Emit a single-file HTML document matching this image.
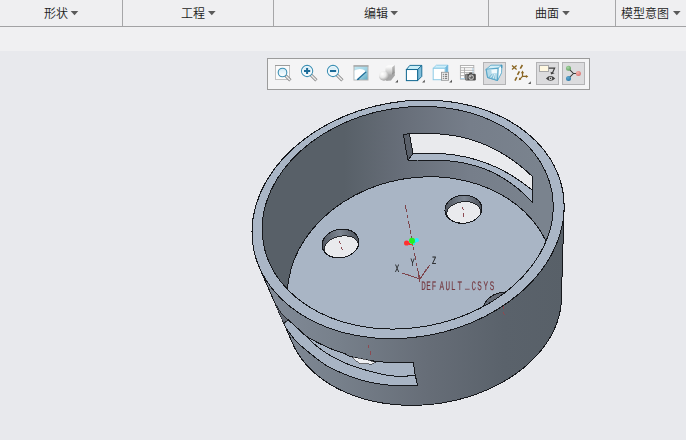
<!DOCTYPE html>
<html lang="zh"><head><meta charset="utf-8"><title>Creo</title>
<style>
html,body{margin:0;padding:0}
body{width:686px;height:440px;overflow:hidden;position:relative;background:#e8e9ed;font-family:"Liberation Sans","Noto Sans CJK SC",sans-serif}
#top{position:absolute;left:0;top:0;width:686px;height:26px;background:#efeff1;border-bottom:1px solid #a2a2a4}
#sub{position:absolute;left:0;top:27px;width:686px;height:24px;background:#f0f0f2}
.tab{position:absolute;top:0;height:26px;border-right:1px solid #a6a6a8;box-sizing:border-box}
.lbl{position:absolute;top:6px;font-size:12px;line-height:16px;color:#1c1c1c;white-space:nowrap;letter-spacing:0;font-weight:350}
.arr{position:absolute;top:11px;width:0;height:0;border-left:3.7px solid transparent;border-right:3.7px solid transparent;border-top:4.4px solid #505050}
#tb{position:absolute;left:267px;top:58px;width:321px;height:30px;border:1px solid #9b9b9b;background:#f4f4f5}
</style></head><body>
<div id="top">
<div class="tab" style="left:0;width:123px"></div>
<div class="tab" style="left:123px;width:151px"></div>
<div class="tab" style="left:274px;width:215px"></div>
<div class="tab" style="left:489px;width:127px"></div>
<span class="lbl" style="left:44px">形状</span>
<span class="lbl" style="left:181px">工程</span>
<span class="lbl" style="left:364px">编辑</span>
<span class="lbl" style="left:535px">曲面</span>
<span class="lbl" style="left:621px">模型意图</span>
</div>
<svg width="686" height="26" style="position:absolute;left:0;top:0"><path d="M70.7 10.9 h7.6 l-3.8 4.4 z" fill="#5a5a5a"/><path d="M208.0 10.9 h7.6 l-3.8 4.4 z" fill="#5a5a5a"/><path d="M390.4 10.9 h7.6 l-3.8 4.4 z" fill="#5a5a5a"/><path d="M562.2 10.9 h7.6 l-3.8 4.4 z" fill="#5a5a5a"/><path d="M673.0 10.9 h7.6 l-3.8 4.4 z" fill="#5a5a5a"/></svg>
<div id="sub"></div>
<div id="tb"></div>
<svg width="686" height="440" viewBox="0 0 686 440" style="position:absolute;left:0;top:0" shape-rendering="crispEdges">
<defs>
<linearGradient id="gOut" gradientUnits="userSpaceOnUse" x1="262" y1="0" x2="565" y2="0">
<stop offset="0" stop-color="#828b98"/><stop offset="0.25" stop-color="#77808b"/><stop offset="0.55" stop-color="#666d77"/><stop offset="0.8" stop-color="#5a626b"/><stop offset="1" stop-color="#586068"/></linearGradient>
<linearGradient id="gIn" gradientUnits="userSpaceOnUse" x1="262" y1="0" x2="555" y2="0">
<stop offset="0" stop-color="#586068"/><stop offset="0.28" stop-color="#586068"/><stop offset="0.49" stop-color="#686f7a"/><stop offset="0.71" stop-color="#767e8a"/><stop offset="0.95" stop-color="#7a838e"/><stop offset="1" stop-color="#7a838e"/></linearGradient>
<linearGradient id="gHole" x1="0" y1="0" x2="1" y2="0">
<stop offset="0" stop-color="#4f555e"/><stop offset="0.55" stop-color="#7d8692"/><stop offset="0.85" stop-color="#5d636d"/><stop offset="1" stop-color="#50565f"/></linearGradient>
<clipPath id="cIn"><path d="M551.908 191.661 A146.545 110.010 -10.243 0 1 427.260 325.976 A146.545 110.010 -10.243 0 1 263.489 243.777 A146.545 110.010 -10.243 0 1 388.137 109.462 A146.545 110.010 -10.243 0 1 551.908 191.661 Z" /></clipPath>
<clipPath id="cHull"><path d="M293.7 345.9 L293.0 344.3 L259.6 268.1 L258.8 266.2 L258.1 264.3 L257.3 262.3 L256.6 260.4 L256.0 258.4 L255.4 256.4 L254.9 254.5 L254.4 252.5 L253.9 250.5 L253.5 248.4 L253.2 246.4 L252.9 244.4 L252.6 242.3 L252.4 240.3 L252.2 238.2 L252.1 236.2 L252.0 234.1 L252.0 232.0 L252.0 230.0 L252.1 227.9 L252.2 225.8 L252.4 223.7 L252.6 221.7 L252.9 219.6 L253.2 217.5 L253.5 215.4 L253.9 213.3 L254.4 211.3 L254.9 209.2 L255.4 207.1 L256.0 205.0 L256.6 203.0 L257.3 200.9 L258.1 198.9 L258.8 196.8 L259.6 194.8 L260.5 192.7 L261.4 190.7 L262.4 188.7 L263.4 186.7 L264.4 184.7 L265.5 182.7 L266.6 180.7 L267.8 178.8 L269.0 176.8 L270.3 174.9 L271.6 173.0 L272.9 171.0 L274.3 169.1 L275.7 167.3 L277.2 165.4 L278.7 163.6 L280.2 161.7 L281.8 159.9 L283.4 158.1 L285.1 156.3 L286.8 154.6 L288.5 152.8 L290.3 151.1 L292.1 149.4 L293.9 147.8 L295.8 146.1 L297.7 144.5 L299.7 142.9 L301.6 141.3 L303.6 139.7 L305.7 138.2 L307.8 136.7 L309.9 135.2 L312.0 133.7 L314.1 132.3 L316.3 130.9 L318.6 129.5 L320.8 128.1 L323.1 126.8 L325.4 125.5 L327.7 124.2 L330.0 123.0 L332.4 121.8 L334.8 120.6 L337.2 119.5 L339.7 118.3 L342.1 117.2 L344.6 116.2 L347.1 115.2 L349.6 114.2 L352.1 113.2 L354.7 112.3 L357.3 111.4 L359.8 110.5 L362.4 109.7 L365.0 108.9 L367.7 108.1 L370.3 107.4 L373.0 106.7 L375.6 106.0 L378.3 105.4 L381.0 104.8 L383.7 104.2 L386.3 103.7 L389.0 103.2 L391.8 102.8 L394.5 102.3 L397.2 102.0 L399.9 101.6 L402.6 101.3 L405.3 101.0 L408.1 100.8 L410.8 100.6 L413.5 100.4 L416.2 100.3 L419.0 100.2 L421.7 100.1 L424.4 100.1 L427.1 100.1 L429.8 100.2 L432.5 100.3 L435.2 100.4 L437.8 100.6 L440.5 100.8 L443.2 101.0 L445.8 101.3 L448.5 101.6 L451.1 101.9 L453.7 102.3 L456.3 102.7 L458.9 103.1 L461.4 103.6 L464.0 104.2 L466.5 104.7 L469.0 105.3 L471.5 105.9 L474.0 106.6 L476.5 107.3 L478.9 108.0 L481.3 108.8 L483.7 109.5 L486.1 110.4 L488.4 111.2 L490.8 112.1 L493.1 113.1 L495.3 114.0 L497.6 115.0 L499.8 116.0 L502.0 117.1 L504.1 118.2 L506.3 119.3 L508.4 120.4 L510.4 121.6 L512.5 122.8 L514.5 124.1 L516.5 125.3 L518.4 126.6 L520.3 127.9 L522.2 129.3 L524.0 130.7 L525.8 132.1 L527.6 133.5 L529.3 135.0 L531.0 136.4 L532.7 137.9 L534.3 139.5 L535.9 141.0 L537.4 142.6 L538.9 144.2 L540.4 145.9 L541.8 147.5 L543.2 149.2 L544.6 150.9 L545.9 152.6 L547.1 154.3 L548.3 156.1 L549.5 157.8 L550.6 159.6 L551.7 161.5 L552.8 163.3 L553.8 165.1 L554.7 167.0 L555.6 168.9 L556.5 170.8 L557.3 172.7 L558.1 174.6 L558.8 176.5 L559.5 178.5 L560.1 180.4 L560.7 182.4 L561.3 184.4 L561.8 186.4 L562.2 188.4 L562.6 190.4 L563.0 192.4 L563.3 194.5 L563.5 196.5 L563.7 198.6 L563.9 200.6 L564.0 202.7 L564.1 204.7 L564.1 206.8 L564.1 208.9 L561.3 300.1 L561.3 301.8 L561.1 303.5 L561.0 305.3 L560.7 307.0 L560.5 308.7 L560.2 310.5 L559.9 312.2 L559.5 313.9 L559.1 315.6 L558.6 317.4 L558.1 319.1 L557.5 320.8 L557.0 322.5 L556.3 324.2 L555.7 325.9 L555.0 327.6 L554.2 329.3 L553.4 331.0 L552.6 332.6 L551.8 334.3 L550.9 335.9 L549.9 337.6 L548.9 339.2 L547.9 340.9 L546.9 342.5 L545.8 344.1 L544.6 345.7 L543.5 347.2 L542.3 348.8 L541.0 350.4 L539.8 351.9 L538.5 353.4 L537.1 355.0 L535.7 356.5 L534.3 357.9 L532.9 359.4 L531.4 360.9 L529.9 362.3 L528.3 363.7 L526.8 365.1 L525.2 366.5 L523.5 367.9 L521.9 369.2 L520.2 370.5 L518.4 371.8 L516.7 373.1 L514.9 374.4 L513.1 375.6 L511.2 376.9 L509.4 378.1 L507.5 379.2 L505.6 380.4 L503.6 381.5 L501.7 382.6 L499.7 383.7 L497.7 384.8 L495.6 385.8 L493.6 386.9 L491.5 387.9 L489.4 388.8 L487.3 389.8 L485.1 390.7 L483.0 391.6 L480.8 392.4 L478.6 393.3 L476.4 394.1 L474.2 394.9 L471.9 395.6 L469.7 396.4 L467.4 397.1 L465.1 397.8 L462.8 398.4 L460.5 399.0 L458.2 399.6 L455.9 400.2 L453.6 400.7 L451.2 401.2 L448.9 401.7 L446.5 402.2 L444.1 402.6 L441.8 403.0 L439.4 403.3 L437.0 403.7 L434.6 404.0 L432.2 404.2 L429.8 404.5 L427.4 404.7 L425.0 404.9 L422.6 405.0 L420.2 405.1 L417.8 405.2 L415.4 405.3 L413.1 405.3 L410.7 405.3 L408.3 405.3 L405.9 405.3 L403.5 405.2 L401.2 405.0 L398.8 404.9 L396.5 404.7 L394.1 404.5 L391.8 404.3 L389.5 404.0 L387.1 403.7 L384.8 403.4 L382.5 403.0 L380.3 402.6 L378.0 402.2 L375.7 401.8 L373.5 401.3 L371.3 400.8 L369.1 400.3 L366.9 399.7 L364.7 399.1 L362.6 398.5 L360.4 397.8 L358.3 397.2 L356.2 396.5 L354.2 395.7 L352.1 395.0 L350.1 394.2 L348.1 393.4 L346.1 392.5 L344.1 391.7 L342.2 390.8 L340.3 389.9 L338.4 388.9 L336.5 388.0 L334.7 387.0 L332.9 386.0 L331.1 384.9 L329.4 383.9 L327.6 382.8 L325.9 381.7 L324.3 380.5 L322.6 379.4 L321.0 378.2 L319.5 377.0 L317.9 375.8 L316.4 374.5 L315.0 373.3 L313.5 372.0 L312.1 370.7 L310.7 369.4 L309.4 368.0 L308.1 366.7 L306.8 365.3 L305.6 363.9 L304.4 362.5 L303.3 361.0 L302.1 359.6 L301.0 358.1 L300.0 356.6 L299.0 355.1 L298.0 353.6 L297.1 352.1 L296.2 350.6 L295.3 349.0 L294.5 347.4 Z"/></clipPath>
</defs>
<path d="M293.7 345.9 L293.0 344.3 L259.6 268.1 L258.8 266.2 L258.1 264.3 L257.3 262.3 L256.6 260.4 L256.0 258.4 L255.4 256.4 L254.9 254.5 L254.4 252.5 L253.9 250.5 L253.5 248.4 L253.2 246.4 L252.9 244.4 L252.6 242.3 L252.4 240.3 L252.2 238.2 L252.1 236.2 L252.0 234.1 L252.0 232.0 L252.0 230.0 L252.1 227.9 L252.2 225.8 L252.4 223.7 L252.6 221.7 L252.9 219.6 L253.2 217.5 L253.5 215.4 L253.9 213.3 L254.4 211.3 L254.9 209.2 L255.4 207.1 L256.0 205.0 L256.6 203.0 L257.3 200.9 L258.1 198.9 L258.8 196.8 L259.6 194.8 L260.5 192.7 L261.4 190.7 L262.4 188.7 L263.4 186.7 L264.4 184.7 L265.5 182.7 L266.6 180.7 L267.8 178.8 L269.0 176.8 L270.3 174.9 L271.6 173.0 L272.9 171.0 L274.3 169.1 L275.7 167.3 L277.2 165.4 L278.7 163.6 L280.2 161.7 L281.8 159.9 L283.4 158.1 L285.1 156.3 L286.8 154.6 L288.5 152.8 L290.3 151.1 L292.1 149.4 L293.9 147.8 L295.8 146.1 L297.7 144.5 L299.7 142.9 L301.6 141.3 L303.6 139.7 L305.7 138.2 L307.8 136.7 L309.9 135.2 L312.0 133.7 L314.1 132.3 L316.3 130.9 L318.6 129.5 L320.8 128.1 L323.1 126.8 L325.4 125.5 L327.7 124.2 L330.0 123.0 L332.4 121.8 L334.8 120.6 L337.2 119.5 L339.7 118.3 L342.1 117.2 L344.6 116.2 L347.1 115.2 L349.6 114.2 L352.1 113.2 L354.7 112.3 L357.3 111.4 L359.8 110.5 L362.4 109.7 L365.0 108.9 L367.7 108.1 L370.3 107.4 L373.0 106.7 L375.6 106.0 L378.3 105.4 L381.0 104.8 L383.7 104.2 L386.3 103.7 L389.0 103.2 L391.8 102.8 L394.5 102.3 L397.2 102.0 L399.9 101.6 L402.6 101.3 L405.3 101.0 L408.1 100.8 L410.8 100.6 L413.5 100.4 L416.2 100.3 L419.0 100.2 L421.7 100.1 L424.4 100.1 L427.1 100.1 L429.8 100.2 L432.5 100.3 L435.2 100.4 L437.8 100.6 L440.5 100.8 L443.2 101.0 L445.8 101.3 L448.5 101.6 L451.1 101.9 L453.7 102.3 L456.3 102.7 L458.9 103.1 L461.4 103.6 L464.0 104.2 L466.5 104.7 L469.0 105.3 L471.5 105.9 L474.0 106.6 L476.5 107.3 L478.9 108.0 L481.3 108.8 L483.7 109.5 L486.1 110.4 L488.4 111.2 L490.8 112.1 L493.1 113.1 L495.3 114.0 L497.6 115.0 L499.8 116.0 L502.0 117.1 L504.1 118.2 L506.3 119.3 L508.4 120.4 L510.4 121.6 L512.5 122.8 L514.5 124.1 L516.5 125.3 L518.4 126.6 L520.3 127.9 L522.2 129.3 L524.0 130.7 L525.8 132.1 L527.6 133.5 L529.3 135.0 L531.0 136.4 L532.7 137.9 L534.3 139.5 L535.9 141.0 L537.4 142.6 L538.9 144.2 L540.4 145.9 L541.8 147.5 L543.2 149.2 L544.6 150.9 L545.9 152.6 L547.1 154.3 L548.3 156.1 L549.5 157.8 L550.6 159.6 L551.7 161.5 L552.8 163.3 L553.8 165.1 L554.7 167.0 L555.6 168.9 L556.5 170.8 L557.3 172.7 L558.1 174.6 L558.8 176.5 L559.5 178.5 L560.1 180.4 L560.7 182.4 L561.3 184.4 L561.8 186.4 L562.2 188.4 L562.6 190.4 L563.0 192.4 L563.3 194.5 L563.5 196.5 L563.7 198.6 L563.9 200.6 L564.0 202.7 L564.1 204.7 L564.1 206.8 L564.1 208.9 L561.3 300.1 L561.3 301.8 L561.1 303.5 L561.0 305.3 L560.7 307.0 L560.5 308.7 L560.2 310.5 L559.9 312.2 L559.5 313.9 L559.1 315.6 L558.6 317.4 L558.1 319.1 L557.5 320.8 L557.0 322.5 L556.3 324.2 L555.7 325.9 L555.0 327.6 L554.2 329.3 L553.4 331.0 L552.6 332.6 L551.8 334.3 L550.9 335.9 L549.9 337.6 L548.9 339.2 L547.9 340.9 L546.9 342.5 L545.8 344.1 L544.6 345.7 L543.5 347.2 L542.3 348.8 L541.0 350.4 L539.8 351.9 L538.5 353.4 L537.1 355.0 L535.7 356.5 L534.3 357.9 L532.9 359.4 L531.4 360.9 L529.9 362.3 L528.3 363.7 L526.8 365.1 L525.2 366.5 L523.5 367.9 L521.9 369.2 L520.2 370.5 L518.4 371.8 L516.7 373.1 L514.9 374.4 L513.1 375.6 L511.2 376.9 L509.4 378.1 L507.5 379.2 L505.6 380.4 L503.6 381.5 L501.7 382.6 L499.7 383.7 L497.7 384.8 L495.6 385.8 L493.6 386.9 L491.5 387.9 L489.4 388.8 L487.3 389.8 L485.1 390.7 L483.0 391.6 L480.8 392.4 L478.6 393.3 L476.4 394.1 L474.2 394.9 L471.9 395.6 L469.7 396.4 L467.4 397.1 L465.1 397.8 L462.8 398.4 L460.5 399.0 L458.2 399.6 L455.9 400.2 L453.6 400.7 L451.2 401.2 L448.9 401.7 L446.5 402.2 L444.1 402.6 L441.8 403.0 L439.4 403.3 L437.0 403.7 L434.6 404.0 L432.2 404.2 L429.8 404.5 L427.4 404.7 L425.0 404.9 L422.6 405.0 L420.2 405.1 L417.8 405.2 L415.4 405.3 L413.1 405.3 L410.7 405.3 L408.3 405.3 L405.9 405.3 L403.5 405.2 L401.2 405.0 L398.8 404.9 L396.5 404.7 L394.1 404.5 L391.8 404.3 L389.5 404.0 L387.1 403.7 L384.8 403.4 L382.5 403.0 L380.3 402.6 L378.0 402.2 L375.7 401.8 L373.5 401.3 L371.3 400.8 L369.1 400.3 L366.9 399.7 L364.7 399.1 L362.6 398.5 L360.4 397.8 L358.3 397.2 L356.2 396.5 L354.2 395.7 L352.1 395.0 L350.1 394.2 L348.1 393.4 L346.1 392.5 L344.1 391.7 L342.2 390.8 L340.3 389.9 L338.4 388.9 L336.5 388.0 L334.7 387.0 L332.9 386.0 L331.1 384.9 L329.4 383.9 L327.6 382.8 L325.9 381.7 L324.3 380.5 L322.6 379.4 L321.0 378.2 L319.5 377.0 L317.9 375.8 L316.4 374.5 L315.0 373.3 L313.5 372.0 L312.1 370.7 L310.7 369.4 L309.4 368.0 L308.1 366.7 L306.8 365.3 L305.6 363.9 L304.4 362.5 L303.3 361.0 L302.1 359.6 L301.0 358.1 L300.0 356.6 L299.0 355.1 L298.0 353.6 L297.1 352.1 L296.2 350.6 L295.3 349.0 L294.5 347.4 Z" fill="url(#gOut)" stroke="#16181c" stroke-width="1"/>
<g clip-path="url(#cHull)">
<path d="M288.0 319.5 C289.9 321.3 296.5 327.3 299.6 330.1 C302.7 332.9 303.0 334.0 306.4 336.3 C309.8 338.6 315.7 341.6 320.1 343.8 C324.5 346.0 328.5 347.8 332.7 349.5 C336.9 351.2 342.3 352.8 345.2 353.9 C348.1 355.0 346.3 355.3 350.0 356.3 C353.7 357.3 362.4 359.2 367.6 360.1 C372.8 361.0 375.9 361.5 381.3 361.9 C386.7 362.3 394.7 362.3 400.0 362.4 C405.3 362.5 411.1 362.3 413.3 362.3 L415.2 375.1 L417.7 385.4 L417.7 385.4 C413.3 385.4 399.5 386.0 391.4 385.4 C383.2 384.8 375.7 383.5 368.8 382.0 C361.9 380.5 356.5 378.7 350.0 376.3 C343.5 373.9 334.4 369.7 330.0 367.6 C325.6 365.5 327.6 366.6 323.9 363.9 C320.2 361.2 312.4 355.4 307.6 351.4 C302.8 347.4 298.9 344.3 295.1 340.1 C291.3 335.9 286.9 329.2 285.0 326.3 C283.1 323.4 283.8 323.6 283.5 323.0 Z" fill="#a8b4c4" stroke="#16181c" stroke-width="1" stroke-linejoin="round"/>
<path d="M274.0 300.5 L281.3 312.5 L288.0 319.5 L283.5 323.0 L279.0 314.0 Z" fill="#656b76" stroke="#16181c" stroke-width="0.8"/>
<path d="M306.4 336.3 C307.6 337.6 310.6 341.0 313.9 343.8 C317.2 346.6 322.2 350.5 326.4 353.2 C330.6 355.9 335.2 358.2 338.9 360.1 C342.6 362.0 344.0 362.8 348.8 364.5 C353.6 366.2 361.1 368.8 367.6 370.6 C374.1 372.4 381.8 374.4 387.6 375.3 C393.5 376.2 398.1 376.3 402.7 376.3 C407.3 376.3 413.1 375.3 415.2 375.1" fill="none" stroke="#16181c" stroke-width="1"/>
<path d="M351.9 357.0 L366.4 359.5 L375.8 362.3 L371.4 364.1 L360.1 363.6 L355.7 360.7 Z" fill="#eff0f3" stroke="#16181c" stroke-width="0.6"/>
</g>
<path d="M562.609 190.413 A157.239 117.739 -10.632 0 1 429.793 335.142 A157.239 117.739 -10.632 0 1 253.530 248.436 A157.239 117.739 -10.632 0 1 386.346 103.706 A157.239 117.739 -10.632 0 1 562.609 190.413 Z" fill="#aab6c6" stroke="#16181c" stroke-width="1"/>
<path d="M551.908 191.661 A146.545 110.010 -10.243 0 1 427.260 325.976 A146.545 110.010 -10.243 0 1 263.489 243.777 A146.545 110.010 -10.243 0 1 388.137 109.462 A146.545 110.010 -10.243 0 1 551.908 191.661 Z" fill="url(#gIn)" stroke="#16181c" stroke-width="1"/>
<path d="M407.9 160.2 C409.5 160.2 414.3 160.1 417.5 160.0 C420.7 160.0 423.8 160.0 427.0 160.0 C430.2 160.0 433.4 160.0 436.6 160.2 C439.8 160.3 443.0 160.4 446.2 160.7 C449.4 160.9 452.6 161.3 455.7 161.7 C458.9 162.2 462.1 162.7 465.3 163.3 C468.5 164.0 471.7 164.8 474.9 165.7 C478.1 166.6 481.3 167.7 484.5 168.9 C487.6 170.2 490.8 171.5 494.0 173.1 C497.2 174.7 500.4 176.4 503.6 178.4 C506.8 180.4 510.0 182.5 513.2 184.9 C516.4 187.3 519.5 189.9 522.7 192.8 C525.9 195.7 530.7 200.6 532.3 202.1 L532.3 189.9 L532.0 189.9 C530.5 188.7 525.9 185.1 522.8 182.9 C519.8 180.7 516.7 178.7 513.7 176.8 C510.6 174.8 507.6 173.1 504.5 171.4 C501.5 169.8 498.4 168.3 495.4 166.9 C492.3 165.5 489.2 164.3 486.2 163.1 C483.1 162.0 480.1 160.9 477.0 160.0 C474.0 159.1 470.9 158.3 467.9 157.5 C464.8 156.8 461.8 156.2 458.7 155.7 C455.7 155.1 452.6 154.7 449.5 154.3 C446.5 154.0 443.4 153.7 440.4 153.5 C437.3 153.3 434.3 153.2 431.2 153.1 C428.2 153.1 425.1 153.1 422.1 153.1 C419.0 153.2 414.4 153.5 412.9 153.5 Z" fill="#aab6c6" stroke="#16181c" stroke-width="1" stroke-linejoin="round"/>
<path d="M409.5 133.8 C411.1 133.7 415.8 133.5 418.9 133.4 C422.1 133.4 425.2 133.3 428.4 133.4 C431.5 133.5 434.7 133.6 437.8 133.8 C441.0 134.0 444.1 134.3 447.3 134.7 C450.4 135.1 453.6 135.6 456.7 136.2 C459.9 136.8 463.0 137.5 466.2 138.3 C469.3 139.1 472.5 140.1 475.6 141.1 C478.8 142.2 481.9 143.4 485.1 144.7 C488.2 146.0 491.4 147.5 494.5 149.1 C497.7 150.7 500.8 152.5 504.0 154.4 C507.1 156.3 510.3 158.4 513.4 160.7 C516.6 162.9 519.7 165.4 522.9 168.0 C526.0 170.6 530.7 175.0 532.3 176.4 L532.3 189.9 L532.0 189.9 C530.5 188.7 525.9 185.1 522.8 182.9 C519.8 180.7 516.7 178.7 513.7 176.8 C510.6 174.8 507.6 173.1 504.5 171.4 C501.5 169.8 498.4 168.3 495.4 166.9 C492.3 165.5 489.2 164.3 486.2 163.1 C483.1 162.0 480.1 160.9 477.0 160.0 C474.0 159.1 470.9 158.3 467.9 157.5 C464.8 156.8 461.8 156.2 458.7 155.7 C455.7 155.1 452.6 154.7 449.5 154.3 C446.5 154.0 443.4 153.7 440.4 153.5 C437.3 153.3 434.3 153.2 431.2 153.1 C428.2 153.1 425.1 153.1 422.1 153.1 C419.0 153.2 414.4 153.5 412.9 153.5 Z" fill="#e9eaed" stroke="#16181c" stroke-width="1" stroke-linejoin="round"/>
<path d="M403.3 134.4 L409.5 133.8 L412.9 153.5 L407.9 160.2 Z" fill="#5a606a" stroke="#16181c" stroke-width="1" stroke-linejoin="round"/>
<path d="M532.3 176.4 L532.3 202.1" stroke="#16181c" stroke-width="1" fill="none"/>
<g clip-path="url(#cIn)">
<path d="M553.529 264.639 A134.497 110.449 -9.996 0 1 440.245 396.757 A134.497 110.449 -9.996 0 1 288.619 311.330 A134.497 110.449 -9.996 0 1 401.903 179.212 A134.497 110.449 -9.996 0 1 553.529 264.639 Z" fill="#a9b5c5" stroke="#16181c" stroke-width="1"/>
<clipPath id="ch1"><ellipse cx="340.5" cy="243.5" rx="18.6" ry="14.2" transform="rotate(-12 340.5 243.5)"/></clipPath><ellipse cx="340.5" cy="243.5" rx="18.6" ry="14.2" transform="rotate(-12 340.5 243.5)" fill="url(#gHole)" stroke="#16181c" stroke-width="1"/><g clip-path="url(#ch1)"><ellipse cx="341.3" cy="247.2" rx="17.4" ry="11.2" transform="rotate(-12 341.3 247.2)" fill="#e9eaed" stroke="#16181c" stroke-width="0.9"/></g><ellipse cx="340.5" cy="243.5" rx="18.6" ry="14.2" transform="rotate(-12 340.5 243.5)" fill="none" stroke="#16181c" stroke-width="1"/>
<clipPath id="ch2"><ellipse cx="463.4" cy="209.3" rx="18.5" ry="14.0" transform="rotate(-5 463.4 209.3)"/></clipPath><ellipse cx="463.4" cy="209.3" rx="18.5" ry="14.0" transform="rotate(-5 463.4 209.3)" fill="url(#gHole)" stroke="#16181c" stroke-width="1"/><g clip-path="url(#ch2)"><ellipse cx="463.7" cy="212.6" rx="17.2" ry="10.9" transform="rotate(-5 463.7 212.6)" fill="#e9eaed" stroke="#16181c" stroke-width="0.9"/></g><ellipse cx="463.4" cy="209.3" rx="18.5" ry="14.0" transform="rotate(-5 463.4 209.3)" fill="none" stroke="#16181c" stroke-width="1"/>
<ellipse cx="501.5" cy="306.3" rx="18.5" ry="13.5" transform="rotate(-18 501.5 306.3)" fill="#666c77" stroke="#16181c" stroke-width="1"/>
</g>
<path d="M551.908 191.661 A146.545 110.010 -10.243 0 1 427.260 325.976 A146.545 110.010 -10.243 0 1 263.489 243.777 A146.545 110.010 -10.243 0 1 388.137 109.462 A146.545 110.010 -10.243 0 1 551.908 191.661 Z" fill="none" stroke="#16181c" stroke-width="1"/>
<path d="M405.3 205 L411.8 238" stroke="#7d444b" stroke-width="1" stroke-dasharray="7 3 3 3" fill="none"/>
<path d="M413.5 247 L416.7 266.5" stroke="#7d444b" stroke-width="1" stroke-dasharray="3 3.5 6.5 3.2" fill="none"/>
<path d="M402.1 273.0 L419.8 279.1 L429.8 264.8 M419.8 279.1 L417.4 267.9 M419.8 279.1 L419.7 281.8" stroke="#7d444b" stroke-width="1" fill="none"/>
<path d="M418.0 271.2 L419.4 277.2 L418.2 277.2 Z M424.6 272.6 L427.2 269.2 L425.6 269.4 Z M406.2 274.2 L409 275.8 L408.6 274.6 Z" fill="#7d444b" stroke="#7d444b" stroke-width="0.6"/>
<path d="M339.1 241 L340.7 244 M341.2 247.1 L342.5 250.5 M462.1 207 L463.6 210 M463.4 212.8 L463.4 216.7 M503.2 306.4 L503.4 308.6 M503.2 312.2 L504.8 315.3 M368.5 344.7 L368.5 348.3 M370.5 350.5 L370.5 354.8" stroke="#8c4a52" stroke-width="1" fill="none"/>
<path d="M406.4 243.1 L413.3 245.3" stroke="#ff2a2a" stroke-width="1.2"/><path d="M412 240.7 L413.3 245.3" stroke="#1fe01f" stroke-width="1.2"/><path d="M416.8 240.2 L413.3 245.3" stroke="#20e8f0" stroke-width="1.2"/>
<g shape-rendering="geometricPrecision"><circle cx="406.6" cy="243.0" r="2.6" fill="#ff3030"/><circle cx="416.8" cy="240.2" r="2.1" fill="#22f0ff"/><circle cx="412" cy="240.7" r="3" fill="#22ee22"/></g>
</svg>
<svg width="686" height="440" viewBox="0 0 686 440" style="position:absolute;left:0;top:0;will-change:transform">
<g shape-rendering="auto" text-rendering="geometricPrecision">
<text x="0" y="0" transform="translate(394.9 271.9) scale(0.62 1)" font-family="Liberation Mono, monospace" font-size="11.2" fill="#111" stroke="#111" stroke-width="0.1">X</text>
<text x="0" y="0" transform="translate(410.6 265.8) scale(0.62 1)" font-family="Liberation Mono, monospace" font-size="11.2" fill="#111" stroke="#111" stroke-width="0.1">Y</text>
<text x="0" y="0" transform="translate(432.0 263.7) scale(0.62 1)" font-family="Liberation Mono, monospace" font-size="11.2" fill="#111" stroke="#111" stroke-width="0.1">Z</text>
<text transform="translate(421.3 289.8) scale(0.58 1)" x="0.00 8.62 18.10 31.29 41.55 51.21 62.24 75.26 86.55 96.55 107.07 117.93" y="0 0 0 0 0 0 0 -1.4 0 0 0 0" font-family="Liberation Mono, monospace" font-size="13.1" fill="#74383f" stroke="#74383f" stroke-width="0.12">DEFAULT_CSYS</text>
</g>
</svg>
<svg width="686" height="440" viewBox="0 0 686 440" style="position:absolute;left:0;top:0">
<defs>
<linearGradient id="iLens" x1="0" y1="0" x2="0" y2="1"><stop offset="0" stop-color="#cfe9f5"/><stop offset="1" stop-color="#ffffff"/></linearGradient>
<linearGradient id="iHandle" x1="0" y1="1" x2="1" y2="0"><stop offset="0" stop-color="#8a8a8a"/><stop offset="0.5" stop-color="#f2f2f2"/><stop offset="1" stop-color="#8f8f8f"/></linearGradient>
<linearGradient id="iRep" x1="0" y1="0" x2="1" y2="1"><stop offset="0" stop-color="#c6e9f4"/><stop offset="0.55" stop-color="#9fd3e4"/><stop offset="1" stop-color="#5fa9c2"/></linearGradient>
<radialGradient id="iSph" cx="0.35" cy="0.3" r="0.8"><stop offset="0" stop-color="#ffffff"/><stop offset="0.45" stop-color="#e9e9e9"/><stop offset="1" stop-color="#8e8e8e"/></radialGradient>
<linearGradient id="iCubF" x1="0" y1="0" x2="0" y2="1"><stop offset="0" stop-color="#f6f6f6"/><stop offset="1" stop-color="#b4b4b4"/></linearGradient>
<linearGradient id="iCubR" x1="0" y1="0" x2="0" y2="1"><stop offset="0" stop-color="#c4c4c4"/><stop offset="1" stop-color="#8a8a8a"/></linearGradient>
<radialGradient id="iG" cx="0.4" cy="0.35" r="0.7"><stop offset="0" stop-color="#a9d6a5"/><stop offset="1" stop-color="#5c9e5a"/></radialGradient>
<radialGradient id="iR" cx="0.4" cy="0.35" r="0.7"><stop offset="0" stop-color="#f6b3ae"/><stop offset="1" stop-color="#d86f6c"/></radialGradient>
<radialGradient id="iB" cx="0.4" cy="0.35" r="0.7"><stop offset="0" stop-color="#5fa8cf"/><stop offset="1" stop-color="#2a78a8"/></radialGradient>
<linearGradient id="iPersp" x1="0" y1="0" x2="1" y2="1"><stop offset="0" stop-color="#b9e2ef"/><stop offset="0.5" stop-color="#e9f7fb"/><stop offset="1" stop-color="#9fd0e2"/></linearGradient>
</defs>
<!-- 1 zoom window -->
<rect x="275.5" y="65.5" width="14" height="14" fill="#fbfbfb" stroke="#c2c2c2"/>
<path d="M275 65.5 H290" stroke="#9c9c9c" stroke-width="1"/>
<path d="M285.6 75.6 L290.4 80.4" stroke="#8d8d8d" stroke-width="3.2" stroke-linecap="butt"/>
<path d="M286 76 L290 80" stroke="#ededed" stroke-width="1.4"/>
<circle cx="282.5" cy="72.5" r="4.3" fill="url(#iLens)" stroke="#3b8fb3" stroke-width="1.1"/>
<!-- 2 zoom in -->
<path d="M310.6 74.6 L316.4 80.4" stroke="#8d8d8d" stroke-width="3.2"/>
<path d="M311 75 L316 80" stroke="#ededed" stroke-width="1.4"/>
<circle cx="307.1" cy="71" r="5.6" fill="url(#iLens)" stroke="#3b8fb3" stroke-width="1.1"/>
<circle cx="307.1" cy="71" r="4.6" fill="none" stroke="#ffffff" stroke-width="0.8" opacity="0.8"/>
<path d="M304 71 H310.2 M307.1 68 V74" stroke="#1b6b98" stroke-width="2"/>
<!-- 3 zoom out -->
<path d="M336.6 74.6 L342.4 80.4" stroke="#8d8d8d" stroke-width="3.2"/>
<path d="M337 75 L342 80" stroke="#ededed" stroke-width="1.4"/>
<circle cx="333" cy="71" r="5.6" fill="url(#iLens)" stroke="#3b8fb3" stroke-width="1.1"/>
<circle cx="333" cy="71" r="4.6" fill="none" stroke="#ffffff" stroke-width="0.8" opacity="0.8"/>
<path d="M330 71 H336.1" stroke="#1b6b98" stroke-width="2"/>
<!-- 4 repaint -->
<rect x="354" y="66" width="14" height="14" fill="url(#iRep)" stroke="#b4b4b4"/>
<path d="M353.5 65.9 H368.5" stroke="#9a9a9a" stroke-width="1"/>
<path d="M354.5 79.5 V70.6 Q358.5 68.2 363 69.6 Q365 70.3 366.2 72 L357.6 79.5 Z" fill="#ffffff"/>
<path d="M366.2 71.8 L357.2 79.7" stroke="#1d6c97" stroke-width="1.2"/>
<path d="M356.6 79.8 L359.6 79.8 L358.6 78.4 Z" fill="#1d6c97"/>
<!-- 5 shading -->
<path d="M388 74 L394.8 72 L394.8 75.5 L391 80.5 L386 81 Z" fill="#8c8c8c" opacity="0.75"/>
<path d="M385.4 67.2 L388.2 64.9 L394.8 64.9 L392.2 67.2 Z" fill="#fafafa"/>
<rect x="385.4" y="67.2" width="6.8" height="7.4" fill="url(#iCubF)"/>
<path d="M392.2 67.2 L394.8 64.9 L394.8 72.6 L392.2 74.8 Z" fill="url(#iCubR)"/>
<circle cx="383.9" cy="75.9" r="4.9" fill="url(#iSph)"/>
<path d="M395.2 82.5 H398 V79.8 Z" fill="#555"/>
<!-- 6 cube -->
<path d="M406.4 69.5 L409.8 65.4 L421.8 65.4 L417.6 69.5 Z" fill="#c9eef8" stroke="#176b93" stroke-width="0.95" stroke-linejoin="round"/>
<path d="M417.6 69.5 L421.8 65.4 L421.8 76.4 L417.6 80.6 Z" fill="#7fbdd9" stroke="#176b93" stroke-width="0.95" stroke-linejoin="round"/>
<rect x="406.4" y="69.5" width="11.2" height="11.1" fill="#ffffff" stroke="#176b93" stroke-width="1.05"/>
<path d="M422.1 82.5 H424.8 V79.8 Z" fill="#555"/>
<!-- 7 cube with list -->
<path d="M433.2 68.3 L436.4 65.2 L447.9 65.2 L445.1 68.3 Z" fill="#cfeffa" stroke="#8ccbe6" stroke-width="0.9" stroke-linejoin="round"/>
<path d="M445.1 68.3 L447.9 65.2 L447.9 76.5 L445.1 79.7 Z" fill="#6fb6da" stroke="#6fb6da" stroke-width="0.6"/>
<rect x="433.2" y="68.3" width="11.9" height="11.4" fill="#ffffff" stroke="#8ccbe6" stroke-width="1"/>
<rect x="441.5" y="72.3" width="7" height="8" fill="#f1f1f1" stroke="#9a9a9a" stroke-width="0.9"/>
<path d="M442.8 74.3 H443.9 M444.8 74.3 H447.2 M442.8 76.3 H443.9 M444.8 76.3 H447.2 M442.8 78.3 H443.9 M444.8 78.3 H447.2" stroke="#555" stroke-width="0.9"/>
<path d="M449.2 82.5 H452 V79.8 Z" fill="#555"/>
<!-- 8 table camera -->
<rect x="460.4" y="65.5" width="13.4" height="13.6" fill="#ffffff" stroke="#ababab" stroke-width="0.9"/>
<rect x="472" y="68" width="1.6" height="8" fill="#cfe5f4"/>
<path d="M460.4 67.7 H473.8 M460.4 70.3 H473.8 M460.4 72.6 H473.8 M460.4 75.6 H473.8 M464.5 67.7 V79" stroke="#ababab" stroke-width="0.9"/>
<path d="M460.4 78.6 H466" stroke="#a9d3ee" stroke-width="0.9"/>
<rect x="465.2" y="73.7" width="10.6" height="6.8" rx="1.2" fill="#4c4c4c"/>
<rect x="469.2" y="72.6" width="3" height="1.8" rx="0.5" fill="#4c4c4c"/>
<rect x="465.5" y="74.3" width="2" height="5.6" fill="#8c8c8c"/>
<circle cx="471.2" cy="77.2" r="2.6" fill="#c6c6c6"/>
<circle cx="471.2" cy="77.2" r="1.6" fill="#555"/>
<circle cx="470.7" cy="76.7" r="0.6" fill="#dcdcdc"/>
<!-- 9 perspective (selected) -->
<rect x="483.5" y="62.5" width="22" height="22" fill="#dcdcde" stroke="#b3b3b5"/>
<path d="M490.9 65.2 L501.8 65.2 L501.5 72.8 L497.5 80.5 L487.6 77.5 L486.1 69.3 Z" fill="#d3eef7" stroke="#6db3d0" stroke-width="1" stroke-linejoin="round"/>
<path d="M498 68.1 L501.8 65.2 L501.5 72.8 L497.5 80.5 Z" fill="#f6fcfe" stroke="#6db3d0" stroke-width="0.9" stroke-linejoin="round"/>
<path d="M486.1 69.3 L491.5 69.9 L491.8 73.8 L487.6 77.5 Z" fill="#b3d9e8"/>
<path d="M486.1 69.3 L498 68.1 L496.8 69.6 L491.5 69.9 Z" fill="#dff2f9"/>
<path d="M498 68.1 L497.5 80.5 L496.8 73.5 L496.8 69.6 Z" fill="#ffffff"/>
<path d="M491.5 69.9 L496.8 69.6 L496.8 73.5 L491.8 73.8 Z" fill="#f3fafd"/>
<path d="M491.8 73.8 L496.8 73.5 L497.5 80.5 L487.6 77.5 Z" fill="#86c1d9"/>
<path d="M493 74.2 L490.4 77.8 M494.6 74 L493.2 78.8 M496 73.9 L495.8 79.6" stroke="#e6f4f9" stroke-width="0.9"/>
<path d="M486.1 69.3 L498 68.1 L497.5 80.5 L487.6 77.5 Z" fill="none" stroke="#5aa6c7" stroke-width="1.1" stroke-linejoin="round"/>
<path d="M500.6 65.4 L501.8 65.2 L501.7 68" fill="none" stroke="#3a8fb8" stroke-width="1"/>
<!-- 10 datum display -->
<g stroke="#8a6623" fill="none">
<path d="M512 65.5 L516.6 69.4 M516.6 65.5 L512 69.4" stroke-width="1.3"/>
<path d="M522.4 65 L520.3 68.7 M519.4 71.4 L517.5 74.9 M516.8 77.1 L515 80.6" stroke-width="1.6"/>
<path d="M522.5 76.4 V72 M522.5 76.4 H527.2 M522.5 76.4 L519.6 79.4" stroke-width="1.2"/>
</g>
<path d="M522.5 70.6 L520.9 73.2 H524.1 Z M528.3 76.4 L525.9 74.9 V77.9 Z M518.7 80.3 L519.4 77.6 L521.4 79.6 Z" fill="#8a6623"/>
<path d="M528.1 84 H530.8 V81.3 Z" fill="#555"/>
<!-- 11 annotation display (selected) -->
<rect x="536.5" y="62.5" width="22" height="22" fill="#dcdcde" stroke="#b3b3b5"/>
<rect x="539.5" y="65.5" width="9" height="6" fill="#fff8e1" stroke="#a8a8a8"/>
<path d="M548.8 68.2 H554.6 L552.4 73" fill="none" stroke="#404040" stroke-width="1.2"/>
<path d="M550.6 71.8 L554.6 73.2 L551 74.6 Z" fill="#404040"/>
<path d="M545.9 78.4 Q550.5 73.8 555.2 78.4 Q550.5 83 545.9 78.4 Z" fill="#444"/>
<circle cx="550.5" cy="78.4" r="1.6" fill="#f4f4f4"/>
<circle cx="550.5" cy="78.4" r="0.8" fill="#333"/>
<!-- 12 spin center (selected) -->
<rect x="562.5" y="62.5" width="22" height="22" fill="#dcdcde" stroke="#b3b3b5"/>
<path d="M568.5 68.3 L573.4 73.5 L568.5 78.4 M573.4 73.5 H578.4" fill="none" stroke="#383838" stroke-width="1.05"/>
<circle cx="568.5" cy="68.3" r="2.5" fill="url(#iG)"/>
<circle cx="578.4" cy="73.5" r="2.5" fill="url(#iR)"/>
<circle cx="568.5" cy="78.4" r="2.5" fill="url(#iB)"/>
</svg>

</body></html>
